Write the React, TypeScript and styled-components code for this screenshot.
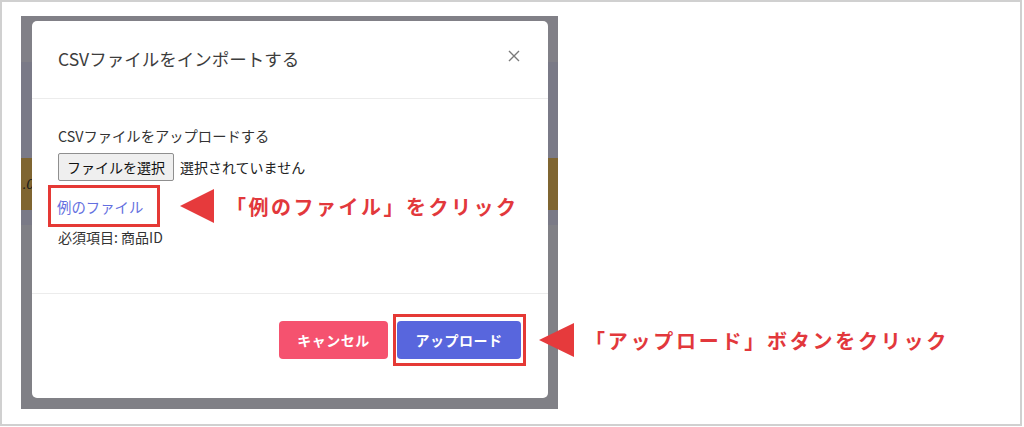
import styled, { createGlobalStyle } from "styled-components";

const GlobalStyle = createGlobalStyle`
  html, body {
    margin: 0;
    padding: 0;
    background: #ffffff;
  }
  body {
    font-family: "Noto Sans CJK JP", "Noto Sans", sans-serif;
  }
`;

type StripeProps = { $h: number; $color: string };

const stripes: { h: number; color: string; label?: string }[] = [
  { h: 46, color: "#818087" },
  { h: 96, color: "#7a7a87" },
  { h: 52, color: "#7f6531", label: ".0" },
  { h: 15, color: "#7a7a87" },
  { h: 184, color: "#808086" },
];

export default function App() {
  return (
    <>
      <GlobalStyle />
      <Frame>
        <Backdrop>
          <PageStripes>
            {stripes.map((s, i) => (
              <Stripe key={i} $h={s.h} $color={s.color}>
                {s.label && <StripeText>{s.label}</StripeText>}
              </Stripe>
            ))}
          </PageStripes>
          <Modal>
            <Header>
              <Title>CSVファイルをインポートする</Title>
              <Close width="12" height="12" viewBox="0 0 12 12">
                <path d="M1 1 L11 11 M11 1 L1 11" stroke="#7a7a7a" strokeWidth="1.4" fill="none" />
              </Close>
            </Header>
            <Body>
              <Label>CSVファイルをアップロードする</Label>
              <FileRow>
                <FileButton>ファイルを選択</FileButton>
                <FileStatus>選択されていません</FileStatus>
              </FileRow>
              <LinkRow>
                <HighlightBox>
                  <SampleLink>例のファイル</SampleLink>
                </HighlightBox>
                <Callout $offset={20}>
                  <Pointer width="34" height="34" viewBox="0 0 34 34">
                    <polygon points="0,17 34,0 34,34" fill="#e63a3c" />
                  </Pointer>
                  <CalloutText $spacing={2.5}>「例のファイル」をクリック</CalloutText>
                </Callout>
              </LinkRow>
              <Required>必須項目: 商品ID</Required>
            </Body>
            <Footer>
              <Button $variant="cancel">キャンセル</Button>
              <ButtonHighlight>
                <Button $variant="primary">アップロード</Button>
                <FloatingCallout>
                  <Pointer width="35" height="34" viewBox="0 0 35 34">
                    <polygon points="0,17 35,0 35,34" fill="#e63a3c" />
                  </Pointer>
                  <CalloutText $spacing={2.75}>「アップロード」ボタンをクリック</CalloutText>
                </FloatingCallout>
              </ButtonHighlight>
            </Footer>
          </Modal>
        </Backdrop>
      </Frame>
    </>
  );
}

const Frame = styled.div`
  box-sizing: border-box;
  width: 1022px;
  height: 426px;
  border: 2px solid #d0d0d0;
  padding: 14px 0 0 19px;
`;

const Backdrop = styled.div`
  display: grid;
  width: 537px;
  height: 393px;
  background: #808086;
`;

const PageStripes = styled.div`
  grid-area: 1 / 1;
  display: flex;
  flex-direction: column;
`;

const Stripe = styled.div<StripeProps>`
  height: ${(p) => p.$h}px;
  background: ${(p) => p.$color};
  display: flex;
  align-items: center;
  overflow: hidden;
`;

const StripeText = styled.span`
  font-family: "DejaVu Serif", serif;
  font-style: italic;
  font-size: 13px;
  color: #1c1c1c;
  margin-left: 1px;
`;

const Modal = styled.div`
  grid-area: 1 / 1;
  margin: 5px 10px 11px 11px;
  background: #ffffff;
  border-radius: 5px;
  display: flex;
  flex-direction: column;
`;

const Header = styled.div`
  box-sizing: border-box;
  height: 78px;
  padding: 0 28px 0 26px;
  display: flex;
  align-items: center;
  justify-content: space-between;
  border-bottom: 1px solid #ececec;
`;

const Title = styled.h2`
  margin: 0 0 2px;
  font-size: 17.5px;
  font-weight: 400;
  color: #3d3d3d;
  line-height: 24px;
`;

const Close = styled.svg`
  margin-bottom: 8px;
`;

const Body = styled.div`
  flex: 1;
  padding: 27px 26px 0;
  display: flex;
  flex-direction: column;
  align-items: flex-start;
`;

const Label = styled.div`
  font-size: 14.3px;
  line-height: 20px;
  color: #333333;
`;

const FileRow = styled.div`
  margin-top: 7px;
  display: flex;
  align-items: center;
  gap: 6px;
`;

const FileButton = styled.button`
  box-sizing: border-box;
  height: 28px;
  padding: 0 8px;
  font-family: inherit;
  font-size: 14px;
  color: #111111;
  background: #efefef;
  border: 1px solid #8f8f8f;
  border-radius: 2px;
`;

const FileStatus = styled.span`
  font-size: 14px;
  color: #222222;
`;

const LinkRow = styled.div`
  margin: 4px 0 0 -10px;
  display: flex;
  align-items: center;
`;

const HighlightBox = styled.div`
  box-sizing: border-box;
  width: 112px;
  height: 42px;
  border: 3px solid #e53935;
  padding-left: 6px;
  display: flex;
  align-items: center;
`;

const SampleLink = styled.a`
  font-size: 14.4px;
  color: #646fe0;
  text-decoration: none;
  cursor: pointer;
`;

const Callout = styled.div<{ $offset: number }>`
  margin-left: ${(p) => p.$offset}px;
  display: flex;
  align-items: center;
  gap: 12px;
`;

const Pointer = styled.svg`
  flex-shrink: 0;
`;

const CalloutText = styled.span<{ $spacing: number }>`
  font-size: 20px;
  font-weight: 700;
  color: #e2383c;
  letter-spacing: ${(p) => p.$spacing}px;
  white-space: nowrap;
`;

const Required = styled.div`
  font-size: 14px;
  line-height: 20px;
  color: #333333;
`;

const Footer = styled.div`
  box-sizing: border-box;
  height: 105px;
  padding: 0 22px 12px;
  border-top: 1px solid #ececec;
  display: flex;
  align-items: center;
  justify-content: flex-end;
  gap: 5px;
`;

const Button = styled.button<{ $variant: "cancel" | "primary" }>`
  box-sizing: border-box;
  height: 38px;
  width: ${(p) => (p.$variant === "cancel" ? 109 : 124)}px;
  border: none;
  border-radius: 4px;
  font-family: inherit;
  font-size: 14px;
  font-weight: 700;
  letter-spacing: 0.5px;
  color: #ffffff;
  background: ${(p) => (p.$variant === "cancel" ? "#f5526f" : "#5866dd")};
`;

const ButtonHighlight = styled.div`
  position: relative;
  box-sizing: border-box;
  border: 3px solid #e53935;
  padding: 4px 2px 4px 1px;
  display: flex;
`;

const FloatingCallout = styled.div`
  position: absolute;
  left: calc(100% + 16px);
  top: 50%;
  transform: translateY(-50%);
  display: flex;
  align-items: center;
  gap: 11px;
`;
